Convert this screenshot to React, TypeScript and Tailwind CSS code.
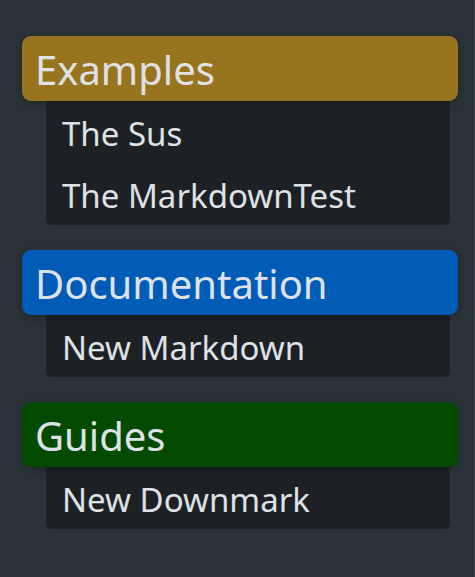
const sections = [
  { title: "Examples", color: "bg-[#98741f]", items: ["The Sus", "The MarkdownTest"] },
  { title: "Documentation", color: "bg-[#005cb6]", items: ["New Markdown"] },
  { title: "Guides", color: "bg-[#024a00]", items: ["New Downmark"] },
];

export default function App() {
  return (
    <div
      className="min-h-[577px] w-[475px] bg-[#2b3338] border-r border-[#3a4247] pt-[36px] pl-[22px] pr-[16px] text-[#dee2e6]"
      style={{ fontFamily: '"Noto Sans", "Open Sans", sans-serif' }}
    >
      <div className="flex flex-col gap-[25px]">
        {sections.map((s) => (
          <div key={s.title} className="flex flex-col">
            <div
              className={`${s.color} h-[65px] rounded-[9px] pl-[13px] flex items-center text-[40px] leading-none shadow-[0_2px_8px_rgba(0,0,0,0.25)] relative z-10`}
            >
              <span className="mt-[2px]">{s.title}</span>
            </div>
            <div className="ml-[24px] mr-[8px] bg-[#1d2125] rounded-b-[5px]">
              {s.items.map((item) => (
                <div key={item} className="h-[62px] pl-[16px] flex items-center text-[33px] leading-none">
                  <span className="mt-[2px]">{item}</span>
                </div>
              ))}
            </div>
          </div>
        ))}
      </div>
    </div>
  );
}
